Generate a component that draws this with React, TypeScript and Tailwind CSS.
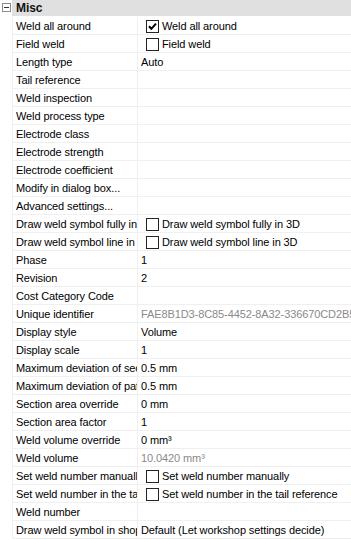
import React from "react";

type Row = {
  name: string;
  value?: string;
  check?: boolean;
  checked?: boolean;
  dim?: boolean;
};

const ROWS: Row[] = [
  { name: "Weld all around", value: "Weld all around", check: true, checked: true },
  { name: "Field weld", value: "Field weld", check: true },
  { name: "Length type", value: "Auto" },
  { name: "Tail reference" },
  { name: "Weld inspection" },
  { name: "Weld process type" },
  { name: "Electrode class" },
  { name: "Electrode strength" },
  { name: "Electrode coefficient" },
  { name: "Modify in dialog box..." },
  { name: "Advanced settings..." },
  { name: "Draw weld symbol fully in 3D", value: "Draw weld symbol fully in 3D", check: true },
  { name: "Draw weld symbol line in 3D", value: "Draw weld symbol line in 3D", check: true },
  { name: "Phase", value: "1" },
  { name: "Revision", value: "2" },
  { name: "Cost Category Code" },
  { name: "Unique identifier", value: "FAE8B1D3-8C85-4452-8A32-336670CD2B5", dim: true },
  { name: "Display style", value: "Volume" },
  { name: "Display scale", value: "1" },
  { name: "Maximum deviation of section", value: "0.5 mm" },
  { name: "Maximum deviation of path", value: "0.5 mm" },
  { name: "Section area override", value: "0 mm" },
  { name: "Section area factor", value: "1" },
  { name: "Weld volume override", value: "0 mm³" },
  { name: "Weld volume", value: "10.0420 mm³", dim: true },
  { name: "Set weld number manually", value: "Set weld number manually", check: true },
  { name: "Set weld number in the tail reference", value: "Set weld number in the tail reference", check: true },
  { name: "Weld number" },
  { name: "Draw weld symbol in shop", value: "Default (Let workshop settings decide)" },
];

function CheckBox({ checked }: { checked?: boolean }) {
  return (
    <span className="flex h-[13px] w-[13px] shrink-0 items-center justify-center border border-[#222] bg-white">
      {checked && (
        <svg width="9" height="9" viewBox="0 0 9 9">
          <path d="M1 4.2 L3.4 6.8 L8 1.6" fill="none" stroke="#000" strokeWidth="2" />
        </svg>
      )}
    </span>
  );
}

export default function App() {
  return (
    <div className="h-[540px] w-[351px] overflow-hidden bg-white font-['Liberation_Sans',Arial,sans-serif] text-[11px] tracking-[-0.1px] text-black">
      {/* category header */}
      <div className="flex h-[17px]">
        <div className="flex w-[12px] shrink-0 items-start pl-[2px] pt-[3px]">
          <span className="flex h-[9px] w-[9px] items-center justify-center border border-[#8c8c8c] bg-white">
            <span className="h-px w-[5px] bg-[#333]" />
          </span>
        </div>
        <div className="flex flex-1 items-center border-b border-white bg-[#e0e0e0] pl-[4px] text-[12px] font-bold text-[#111]">
          Misc
        </div>
      </div>

      {ROWS.map((r) => (
        <div key={r.name} className="flex h-[18px]">
          <div className="w-[12px] shrink-0" />
          <div className="flex flex-1 border-b border-l border-[#f0f0f0]">
            <div className="flex w-[125px] shrink-0 items-center overflow-hidden whitespace-nowrap border-r border-[#f0f0f0] pl-[3px] pt-px">
              {r.name}
            </div>
            <div
              className={`flex min-w-0 flex-1 items-center overflow-hidden whitespace-nowrap pt-px ${
                r.check ? "pl-[8px]" : "pl-[3px]"
              } ${r.dim ? "text-[#8a8a8a]" : ""}`}
            >
              {r.check && <CheckBox checked={r.checked} />}
              {r.value && <span className={r.check ? "pl-[3px]" : ""}>{r.value}</span>}
            </div>
          </div>
        </div>
      ))}
    </div>
  );
}
